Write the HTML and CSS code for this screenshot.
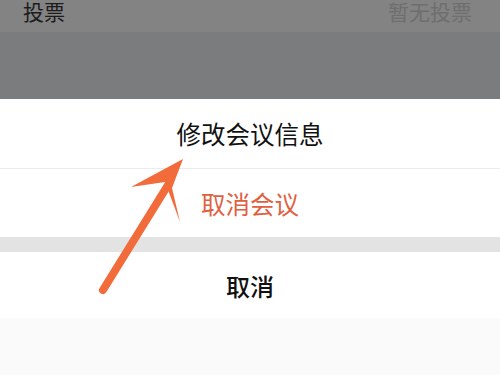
FILE: index.html
```html
<!DOCTYPE html>
<html lang="zh">
<head>
<meta charset="utf-8">
<link rel="stylesheet" href="styles.css">
</head>
<body>
<div class="screen">
  <div class="backdrop">
    <div class="top-row">
      <span class="label">投票</span>
      <span class="value">暂无投票</span>
    </div>
    <div class="dim"></div>
  </div>
  <div class="sheet">
    <div class="item">修改会议信息</div>
    <div class="item danger">取消会议</div>
    <div class="gap"></div>
    <div class="item cancel">取消</div>
    <div class="footer"></div>
  </div>
  <svg class="arrow" width="500" height="375" viewBox="0 0 500 375">
    <line x1="103" y1="290" x2="168" y2="185" stroke="#f26b3b" stroke-width="8" stroke-linecap="round"/>
    <polygon points="183,159 131,187 165,182 180,222 172,188" fill="#f26b3b"/>
  </svg>
</div>
</body>
</html>
```
FILE: styles.css
```css
html, body {
  margin: 0;
  padding: 0;
}
body {
  font-family: "Noto Sans CJK SC", "Noto Sans", sans-serif;
}
.screen {
  position: relative;
  width: 500px;
  height: 375px;
  overflow: hidden;
  display: flex;
  flex-direction: column;
}
.backdrop {
  height: 99px;
  display: flex;
  flex-direction: column;
}
.top-row {
  height: 32px;
  background: #838383;
  display: flex;
  justify-content: space-between;
  align-items: flex-start;
  padding: 0 28px 0 23px;
  font-size: 21px;
  line-height: 22px;
}
.label {
  color: #1c1c1c;
}
.value {
  color: #6e6e6e;
}
.dim {
  flex: 1;
  background: #7b7c7d;
}
.sheet {
  flex: 1;
  display: flex;
  flex-direction: column;
  background: #ffffff;
}
.item {
  height: 69px;
  display: flex;
  align-items: center;
  justify-content: center;
  font-size: 24.5px;
  color: #111111;
  border-bottom: 1px solid #ebebeb;
}
.danger {
  height: 68px;
  color: #e0603f;
  border-bottom: none;
}
.gap {
  height: 15px;
  background: #e3e3e3;
}
.cancel {
  height: 66px;
  border-bottom: none;
  font-size: 24px;
  font-weight: 500;
}
.footer {
  flex: 1;
  background: #fafafa;
}
.arrow {
  position: absolute;
  left: 0;
  top: 0;
}
```
